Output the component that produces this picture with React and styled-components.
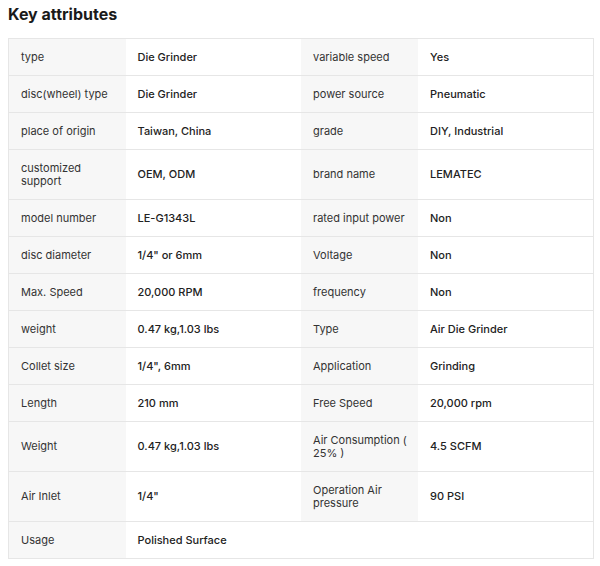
import React from "react";
import styled, { createGlobalStyle } from "styled-components";

const Global = createGlobalStyle`
  html, body { margin: 0; padding: 0; background: #fff; }
  body { font-family: Inter, "Noto Sans", sans-serif; color: #222; }
`;

const Page = styled.div`
  padding: 4px 6px 0 8px;
`;

const Title = styled.h2`
  margin: 0 0 14px 0;
  font-size: 16px;
  line-height: 20px;
  font-weight: 700;
  color: #1a1a1a;
`;

const Table = styled.table`
  width: 586px;
  border-collapse: collapse;
  table-layout: fixed;
  border: 1px solid #e6e6e6;
  font-size: 11px;
  line-height: 13px;
`;

const Col = styled.col`
  width: ${(p) => p.$w};
`;

const Cell = styled.td`
  padding: 11.5px ${(p) => (p.$label ? "6px" : "12px")} 11.5px 12px;
  border-top: 1px solid #e6e6e6;
  vertical-align: middle;
  color: ${(p) => (p.$label ? "#333" : "#222")};
  font-weight: ${(p) => (p.$label ? 400 : 500)};
  background: ${(p) => (p.$label ? "#f7f7f7" : "#fff")};
`;

const rows = [
  ["type", "Die Grinder", "variable speed", "Yes"],
  ["disc(wheel) type", "Die Grinder", "power source", "Pneumatic"],
  ["place of origin", "Taiwan, China", "grade", "DIY, Industrial"],
  ["customized support", "OEM, ODM", "brand name", "LEMATEC"],
  ["model number", "LE-G1343L", "rated input power", "Non"],
  ["disc diameter", '1/4" or 6mm', "Voltage", "Non"],
  ["Max. Speed", "20,000 RPM", "frequency", "Non"],
  ["weight", "0.47 kg,1.03 lbs", "Type", "Air Die Grinder"],
  ["Collet size", '1/4", 6mm', "Application", "Grinding"],
  ["Length", "210 mm", "Free Speed", "20,000 rpm"],
  ["Weight", "0.47 kg,1.03 lbs", "Air Consumption ( 25% )", "4.5 SCFM"],
  ["Air Inlet", '1/4"', "Operation Air pressure", "90 PSI"],
  ["Usage", "Polished Surface"],
];

export default function App() {
  return (
    <Page>
      <Global />
      <Title>Key attributes</Title>
      <Table>
        <colgroup>
          <Col $w="20%" />
          <Col $w="30%" />
          <Col $w="20%" />
          <Col $w="30%" />
        </colgroup>
        <tbody>
          {rows.map((r, i) => (
            <tr key={i}>
              <Cell $label>{r[0]}</Cell>
              <Cell>{r[1]}</Cell>
              {r.length > 2 ? (
                <>
                  <Cell $label>{r[2]}</Cell>
                  <Cell>{r[3]}</Cell>
                </>
              ) : (
                <Cell colSpan={2} />
              )}
            </tr>
          ))}
        </tbody>
      </Table>
    </Page>
  );
}
